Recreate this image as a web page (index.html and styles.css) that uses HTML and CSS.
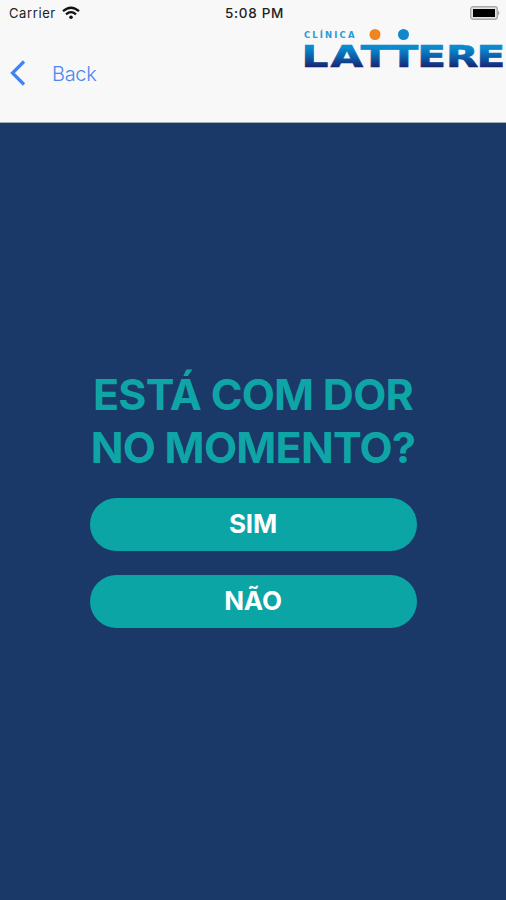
FILE: index.html
```html
<!DOCTYPE html>
<html lang="pt-BR">
<head>
<meta charset="utf-8">
<title>Clínica Lattere</title>
<link rel="stylesheet" href="styles.css">
</head>
<body>
<header class="header">
  <div class="status">
    <div class="carrier"><span>Carrier</span>
      <svg class="wifi" viewBox="0 0 18 14" width="18" height="14" fill="none" stroke="#111" stroke-width="2.3">
        <path d="M1 5.2Q9-1.8 17 5.2"/><path d="M4 8.3Q9 4 14 8.3"/><circle cx="9" cy="11.2" r="1.8" fill="#111" stroke="none"/>
      </svg>
    </div>
    <span class="time">5:08 PM</span>
    <svg class="battery" viewBox="0 0 30 14" width="30" height="14">
      <rect x=".7" y=".7" width="26.6" height="12.6" rx="2.5" fill="#e4e4e4" stroke="#aaa" stroke-width="1.4"/>
      <rect x="3" y="3" width="22" height="8" fill="#000"/><path d="M28 4.5Q31 7 28 9.5Z" fill="#aaa"/>
    </svg>
  </div>
  <div class="nav">
    <a class="back" href="#">
      <svg viewBox="0 0 16 26" width="16" height="26" fill="none" stroke="#3f83f4" stroke-width="3.2"><path d="M14 1.5L2.5 13L14 24.5"/></svg>
      <span>Back</span>
    </a>
    <svg class="logo" viewBox="0 0 203 42" width="203" height="42">
      <defs><linearGradient id="blue" x1="0" y1="0" x2="0" y2="1">
        <stop offset=".25" stop-color="#098bd0"/><stop offset=".5" stop-color="#0b61ab"/><stop offset=".78" stop-color="#172775"/>
      </linearGradient></defs>
      <text class="logo-small" x="1" y="11">CLÍNICA</text>
      <text class="logo-name" transform="scale(1.38 1)" x="-1 20 41.8 62.6 82.8 103.6 125.8" y="40" fill="url(#blue)" stroke="url(#blue)">LATTERE</text>
      <circle cx="72" cy="7.5" r="5.5" fill="#ef8420"/><circle cx="100.5" cy="7.5" r="5.5" fill="#1287cb"/>
    </svg>
  </div>
</header>
<main class="question">
  <h1><span>ESTÁ COM DOR</span><span>NO MOMENTO?</span></h1>
  <button>SIM</button>
  <button>NÃO</button>
</main>
</body>
</html>
```
FILE: styles.css
```css
* { box-sizing: border-box; }
body { margin: 0; height: 900px; overflow: hidden; display: flex; flex-direction: column; background: #1a3868; font-family: Inter, sans-serif; }
.header { height: 123px; flex: none; background: #f8f8f8; border-bottom: 1px solid #a2adba; }
.status { height: 26px; display: grid; grid-template-columns: 1fr auto 1fr; align-items: center; padding: 0 6px 0 9px; color: #222; font-size: 13px; }
.carrier { display: flex; align-items: center; gap: 6px; letter-spacing: .6px; }
.time { font-weight: 500; font-size: 13.5px; letter-spacing: .7px; }
.battery { justify-self: end; }
.nav { display: flex; justify-content: space-between; align-items: flex-start; height: 96px; }
.back { display: flex; align-items: center; gap: 26px; margin: 34px 0 0 10px; color: #4a88f0; text-decoration: none; font-size: 20px; font-weight: 300; letter-spacing: -.3px; }
.back span { padding-top: 1px; }
.logo { margin-top: 1px; overflow: visible; }
.logo-small { font: bold 8.5px "DejaVu Sans", sans-serif; fill: #2a9bd6; letter-spacing: 2.1px; }
.logo-name { font: bold 30.5px "DejaVu Sans", sans-serif; stroke-width: .7px; }
.question { width: 327px; margin: 0 auto; padding-top: 245px; display: flex; flex-direction: column; }
h1 { margin: 0 0 25px; color: #0fa5a6; font-size: 43px; line-height: 52.5px; font-weight: 650; text-align: center; white-space: nowrap; letter-spacing: -.75px; }
h1 span { display: block; }
button { height: 53px; margin: 0 0 24px; padding: 0 0 2px; border: 0; border-radius: 27px; background: #0ca5a6; color: #fff; font: 700 26px Inter, sans-serif; letter-spacing: -.2px; }
```
